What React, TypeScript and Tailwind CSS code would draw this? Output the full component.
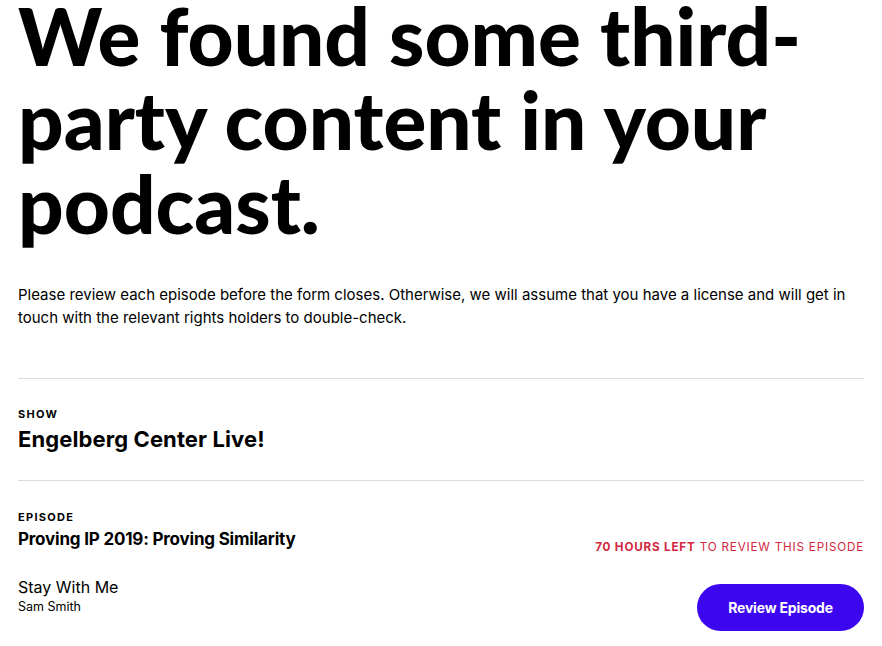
export default function App() {
  return (
    <div className="min-h-screen bg-white text-black px-[18px] font-['Inter',sans-serif]">
      <h1 className="-mt-[7px] text-[80px] leading-[84px] font-black font-['Lato',sans-serif]">
        We found some third-party content in your podcast.
      </h1>

      <p className="mt-[38px] text-[15px] leading-[23px]">
        Please review each episode before the form closes. Otherwise, we will assume that you have a license and will get in touch with the relevant rights holders to double-check.
      </p>

      {/* show */}
      <div className="mt-[49px] border-t border-[#dcdcdc] pt-[28px] pb-[27px]">
        <div className="text-[11px] leading-[14px] font-bold tracking-[1.3px] uppercase">Show</div>
        <div className="mt-[4px] text-[22px] leading-[28px] font-bold tracking-[0.1px]">Engelberg Center Live!</div>
      </div>

      {/* episode */}
      <div className="border-t border-[#dcdcdc] pt-[29px]">
        <div className="text-[11px] leading-[14px] font-bold tracking-[1.3px] uppercase">Episode</div>
        <div className="mt-[3px] flex items-end justify-between">
          <div className="text-[17px] leading-[24px] font-bold tracking-[-0.2px]">Proving IP 2019: Proving Similarity</div>
          <div className="-mb-[4px] text-[11.7px] leading-[16px] tracking-[0.8px] uppercase text-[#d22840]">
            <span className="font-bold">70 Hours left</span> to review this episode
          </div>
        </div>
        <div className="mt-[25px] flex items-start justify-between">
          <div>
            <div className="text-[16px] leading-[22px]">Stay With Me</div>
            <div className="text-[12.5px] leading-[18px]">Sam Smith</div>
          </div>
          <button className="mt-[8px] w-[167px] h-[47px] rounded-full bg-[#3c06ef] text-white text-[14px] font-bold tracking-[-0.2px]">
            Review Episode
          </button>
        </div>
      </div>
    </div>
  );
}
